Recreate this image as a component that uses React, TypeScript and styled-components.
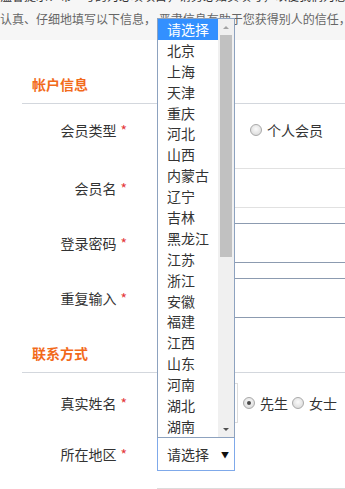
import React from 'react';
import styled, { createGlobalStyle } from 'styled-components';

const GlobalStyle = createGlobalStyle`
  html, body {
    margin: 0;
    padding: 0;
    background: #fff;
  }
  body {
    font-family: 'Noto Sans CJK SC', 'Microsoft YaHei', sans-serif;
  }
`;

const Page = styled.div`
  width: 345px;
  height: 489px;
  overflow: hidden;
`;

const Notice = styled.div`
  background: #f6f6f6;
  margin-top: -16px;
  padding-bottom: 10px;
  font-size: 12px;
  line-height: 23px;
  color: #666;
  white-space: nowrap;
  overflow: hidden;
`;

const NoticeTitle = styled.div`
  color: #333;
`;

const SectionTitle = styled.div<{ $top: number }>`
  margin-left: 22px;
  padding: ${(p) => p.$top}px 0 9px 10px;
  border-bottom: 1px solid #d3d7dd;
  font-size: 14px;
  font-weight: bold;
  line-height: 20px;
  color: #f26a1b;
`;

const Row = styled.div<{ $top: number; $h: number }>`
  display: flex;
  align-items: center;
  margin-top: ${(p) => p.$top}px;
  height: ${(p) => p.$h}px;
`;

const Label = styled.div`
  width: 127px;
  flex-shrink: 0;
  text-align: right;
  font-size: 14px;
  color: #333;
  white-space: nowrap;
`;

const Star = styled.span`
  color: #e4393c;
  margin-left: 4px;
`;

const Field = styled.div`
  margin-left: 30px;
  flex: 1;
  min-width: 0;
  height: 100%;
  display: flex;
  align-items: center;
`;

const TextInput = styled.input<{ $w: number; $border: string }>`
  box-sizing: border-box;
  width: ${(p) => p.$w}px;
  height: 100%;
  flex-shrink: 0;
  margin: 0;
  border: 1px solid ${(p) => p.$border};
  background: #fff;
  outline: none;
`;

const RadioLabel = styled.label<{ $gap: number }>`
  display: flex;
  align-items: center;
  gap: 5px;
  margin-left: ${(p) => p.$gap}px;
  font-size: 14px;
  color: #333;
  white-space: nowrap;
  flex-shrink: 0;
`;

const Radio = styled.span<{ $checked?: boolean }>`
  box-sizing: border-box;
  width: 12px;
  height: 12px;
  border-radius: 50%;
  border: 1px solid #a9a9a9;
  background: radial-gradient(circle at 50% 40%, #fbfbfb, #d4d4d4);
  display: inline-flex;
  align-items: center;
  justify-content: center;
  &::after {
    content: '';
    display: ${(p) => (p.$checked ? 'block' : 'none')};
    width: 4px;
    height: 4px;
    border-radius: 50%;
    background: #4a4a4a;
  }
`;

const SelectBox = styled.div`
  position: relative;
  box-sizing: border-box;
  width: 78px;
  height: 100%;
  border: 1px solid #7fa9ea;
  background: #fff;
  display: flex;
  align-items: center;
  padding: 0 5px 0 9px;
  font-size: 14px;
  color: #333;
`;

const Caret = styled.span`
  margin-left: auto;
  font-size: 8px;
  color: #111;
`;

const DropList = styled.div`
  position: absolute;
  left: -1px;
  bottom: 100%;
  z-index: 5;
  box-sizing: border-box;
  width: 78px;
  height: 420px;
  border: 1px solid #8da2bf;
  background: #fff;
  display: flex;
`;

const Options = styled.div`
  flex: 1;
  display: flex;
  flex-direction: column;
`;

const Option = styled.div<{ $active?: boolean }>`
  height: 20.9px;
  line-height: 20.9px;
  padding-left: 9px;
  font-size: 14px;
  white-space: nowrap;
  color: ${(p) => (p.$active ? '#fff' : '#333')};
  background: ${(p) => (p.$active ? '#3390ff' : 'transparent')};
`;

const ScrollBar = styled.div`
  width: 16px;
  background: #f0f0f0;
  display: flex;
  flex-direction: column;
`;

const ScrollButton = styled.div`
  height: 16px;
  display: flex;
  align-items: center;
  justify-content: center;
`;

const ArrowUp = styled.span`
  width: 0;
  height: 0;
  border-left: 3.5px solid transparent;
  border-right: 3.5px solid transparent;
  border-bottom: 3.5px solid #a3a3a3;
`;

const ArrowDown = styled.span`
  width: 0;
  height: 0;
  border-left: 3.5px solid transparent;
  border-right: 3.5px solid transparent;
  border-top: 3.5px solid #505050;
`;

const Track = styled.div`
  flex: 1;
  padding: 0 2px;
`;

const Thumb = styled.div`
  height: 222px;
  background: #c1c1c1;
`;

const provinces = [
  '北京', '上海', '天津', '重庆', '河北', '山西', '内蒙古', '辽宁', '吉林',
  '黑龙江', '江苏', '浙江', '安徽', '福建', '江西', '山东', '河南', '湖北', '湖南',
];

const App: React.FC = () => {
  return (
    <Page>
      <GlobalStyle />
      <Notice>
        <NoticeTitle>温馨提示：带 * 号的为必填项目，请务必如实填写，以便我们为您提供更好的服务</NoticeTitle>
        <div>认真、仔细地填写以下信息， 严肃信息有助于您获得别人的信任，也能让您获得更多机会</div>
      </Notice>

      <SectionTitle $top={34}>帐户信息</SectionTitle>

      <Row $top={6} $h={40}>
        <Label>会员类型<Star>*</Star></Label>
        <Field>
          <RadioLabel $gap={0}><Radio />企业会员</RadioLabel>
          <RadioLabel $gap={20}><Radio />个人会员</RadioLabel>
        </Field>
      </Row>

      <Row $top={18} $h={40}>
        <Label>会员名<Star>*</Star></Label>
        <Field>
          <TextInput $w={240} $border="#e1e1e1" />
        </Field>
      </Row>

      <Row $top={15} $h={40}>
        <Label>登录密码<Star>*</Star></Label>
        <Field>
          <TextInput type="password" $w={240} $border="#8c9bb0" />
        </Field>
      </Row>

      <Row $top={15} $h={40}>
        <Label>重复输入<Star>*</Star></Label>
        <Field>
          <TextInput type="password" $w={240} $border="#8c9bb0" />
        </Field>
      </Row>

      <SectionTitle $top={25}>联系方式</SectionTitle>

      <Row $top={10} $h={40}>
        <Label>真实姓名<Star>*</Star></Label>
        <Field>
          <TextInput $w={81} $border="#dcdcdc" />
          <RadioLabel $gap={5}><Radio $checked />先生</RadioLabel>
          <RadioLabel $gap={4}><Radio />女士</RadioLabel>
        </Field>
      </Row>

      <Row $top={14} $h={34}>
        <Label>所在地区<Star>*</Star></Label>
        <Field>
          <SelectBox>
            请选择
            <Caret>▼</Caret>
            <DropList>
              <Options>
                <Option $active>请选择</Option>
                {provinces.map((name) => (
                  <Option key={name}>{name}</Option>
                ))}
              </Options>
              <ScrollBar>
                <ScrollButton><ArrowUp /></ScrollButton>
                <Track><Thumb /></Track>
                <ScrollButton><ArrowDown /></ScrollButton>
              </ScrollBar>
            </DropList>
          </SelectBox>
        </Field>
      </Row>

      <Row $top={17} $h={40}>
        <Label />
        <Field>
          <TextInput $w={240} $border="#dcdcdc" />
        </Field>
      </Row>
    </Page>
  );
};

export default App;
